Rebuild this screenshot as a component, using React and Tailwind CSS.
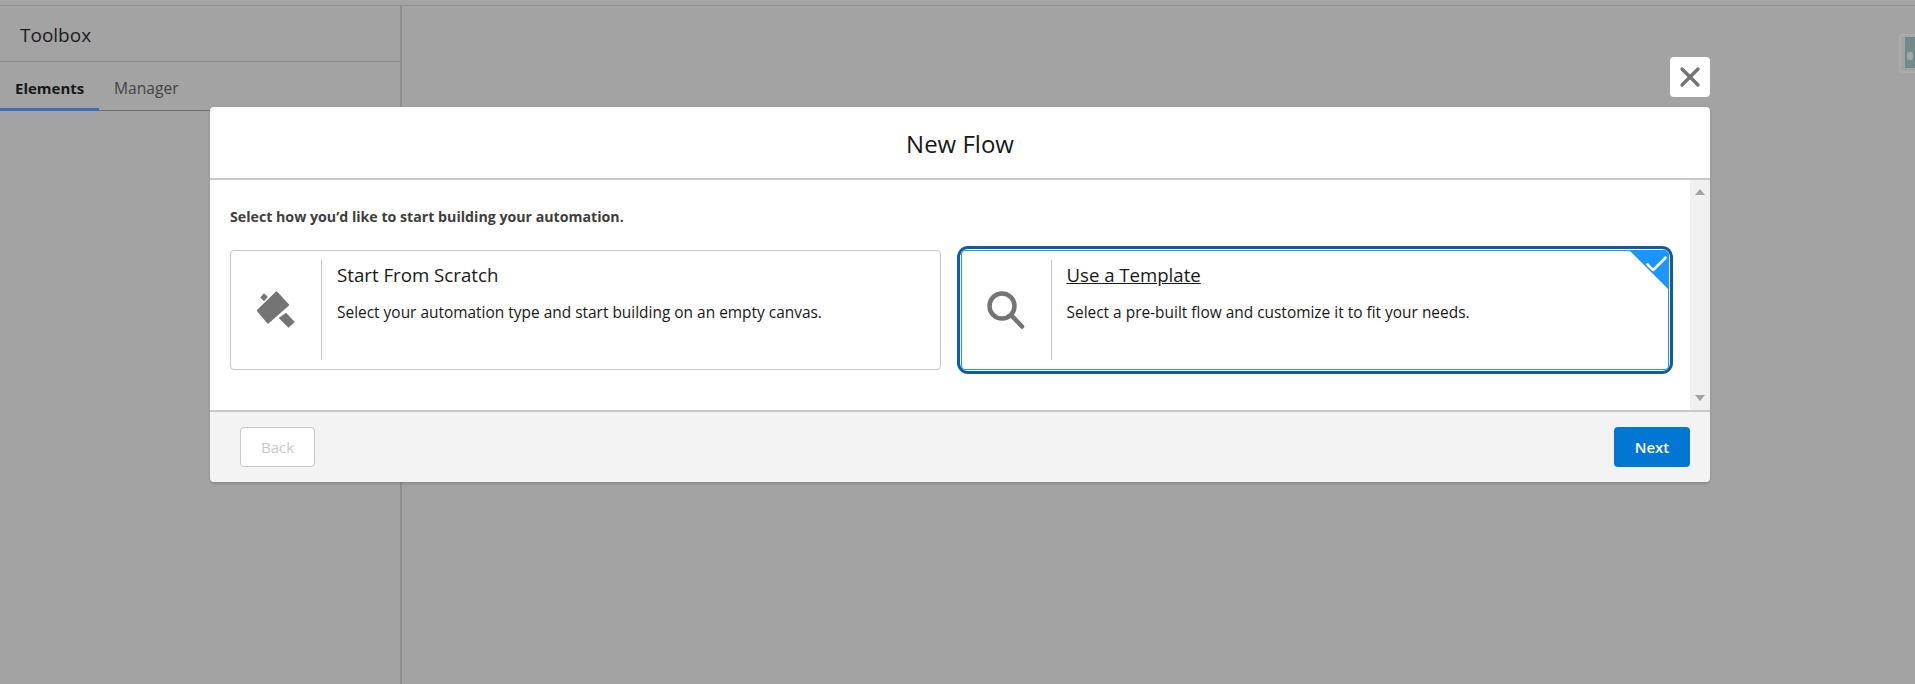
import { X, Check } from 'lucide-react';

function HammerIcon() {
  return (
    <svg width="42" height="40" viewBox="0 0 42 40" fill="#747474" stroke="#747474" strokeWidth="1.5" strokeLinejoin="round">
      <polygon points="21.5,2 33.5,15 13,33 2.5,20.5" />
      <polygon points="5.5,7.5 9,3.5 12.5,7 9,11" strokeWidth="0.5" />
      <polygon points="24,28 31,23 39.5,32 33.5,37.5" strokeWidth="0.5" />
    </svg>
  );
}

function SearchIcon() {
  return (
    <svg width="38" height="38" viewBox="0 0 38 38" fill="none" stroke="#747474" strokeWidth="4.5" strokeLinecap="round">
      <circle cx="15" cy="15" r="12.5" />
      <path d="M24.5 24.5 L35 35.5" />
    </svg>
  );
}

function OptionCard({ icon, title, text, selected }) {
  return (
    <div
      className={
        selected
          ? 'relative flex-1 h-[120px] flex overflow-hidden rounded-[4px] border border-[#1b96ff] bg-white'
          : 'relative flex-1 h-[120px] flex rounded-[4px] border border-[#c9c9c9] bg-white'
      }
    >
      <div className={selected ? 'w-[90px] h-full py-[9px] shrink-0' : 'w-[91px] h-full py-[9px] shrink-0'}>
        <div className="h-full flex items-center justify-center border-r border-[#c9c9c9]">{icon}</div>
      </div>
      <div className="pl-[15px] pt-[10px]">
        <div className={selected ? 'text-[18.6px] leading-[28px] text-[#181818] underline' : 'text-[18.7px] leading-[28px] text-[#181818]'}>
          {title}
        </div>
        <div className="mt-[13px] text-[15.45px] leading-[20px] text-[#181818]">{text}</div>
      </div>
      {selected && (
        <>
          <div className="absolute top-0 right-0 w-0 h-0 border-l-[38px] border-b-[38px] border-l-transparent border-b-transparent border-t-[38px] border-t-[#1b96ff] border-r-0" />
          <Check className="absolute top-0 right-[-2px] text-white" size={27} strokeWidth={2.4} />
        </>
      )}
    </div>
  );
}

export default function App() {
  return (
    <div className="relative h-[684px] overflow-hidden bg-[#a3a3a3] font-['Open_Sans',sans-serif]">
      <div className="h-[6px] border-b border-[#8c8c8c]" />
      <aside className="w-[402px] h-[678px] border-r-2 border-[#8f8f8f]">
        <div className="h-[56px] pl-[20px] pt-[4px] flex items-center border-b border-[#8a8a8a] text-[19px] text-[#1c1c1c]">Toolbox</div>
        <div className="h-[49px] flex border-b border-[#6f6f6f]">
          <div className="w-[99px] -mb-px pl-[15px] pt-[15px] border-b-[3px] border-[#3d6db5] text-[15px] font-bold text-[#181818]">Elements</div>
          <div className="pl-[15px] pt-[15px] text-[15.6px] text-[#444444]">Manager</div>
        </div>
      </aside>

      <div className="absolute top-[34px] right-0 w-[16px] h-[39px] rounded-l-[4px] border-2 border-r-0 border-[#ababab] bg-[#a3a3a3] pt-[1px] pl-[4px]">
        <div className="w-full h-[31px] flex items-center justify-center bg-[#6f8a88]">
          <div className="w-[6px] h-[8px] mt-[6px] rounded-[2px] bg-[#9aabaa]" />
        </div>
      </div>

      {/* modal */}
      <div className="absolute inset-0 pt-[107px] pl-[210px]">
        <div className="relative w-[1500px] rounded-[4px] shadow-[0_2px_3px_rgba(0,0,0,0.16)]">
          <button className="absolute -top-[50px] right-0 w-[40px] h-[40px] rounded-[4px] bg-white flex items-center justify-center text-[#747474]">
            <X size={32} strokeWidth={2.5} />
          </button>
          <div className="h-[73px] pt-[2px] rounded-t-[4px] bg-white border-b-2 border-[#c9c9c9] flex items-center justify-center text-[24px] text-[#181818]">New Flow</div>
          <div className="h-[230px] flex bg-white">
            <div className="flex-1 pt-[27px] pl-[20px] pr-[21px]">
              <div className="text-[14.2px] leading-[20px] font-bold text-[#3e3e3c]">Select how you’d like to start building your automation.</div>
              <div className="mt-[23px] flex gap-[20px]">
                <OptionCard icon={<HammerIcon />} title="Start From Scratch" text="Select your automation type and start building on an empty canvas." />
                <div className="flex-1 rounded-[7px] shadow-[0_0_0_1px_#fff,0_0_0_4px_#0f5d9e]">
                  <OptionCard selected icon={<SearchIcon />} title="Use a Template" text="Select a pre-built flow and customize it to fit your needs." />
                </div>
              </div>
            </div>
            <div className="w-[20px] bg-[#f0f0f0] flex flex-col items-center justify-between py-[9px]">
              <div className="w-0 h-0 border-x-[5px] border-x-transparent border-b-[6px] border-b-[#a3a3a3]" />
              <div className="w-0 h-0 border-x-[5px] border-x-transparent border-t-[6px] border-t-[#a3a3a3]" />
            </div>
          </div>
          <div className="h-[72px] rounded-b-[4px] bg-[#f3f3f3] border-t-2 border-[#c9c9c9] flex items-center justify-between pl-[30px] pr-[20px]">
            <button className="w-[75px] h-[40px] rounded-[4px] border border-[#c9c9c9] bg-white text-[15px] text-[#c9c9c9]">Back</button>
            <button className="w-[76px] h-[40px] rounded-[4px] bg-[#0176d3] text-[15px] font-semibold text-white">Next</button>
          </div>
        </div>
      </div>
    </div>
  );
}
